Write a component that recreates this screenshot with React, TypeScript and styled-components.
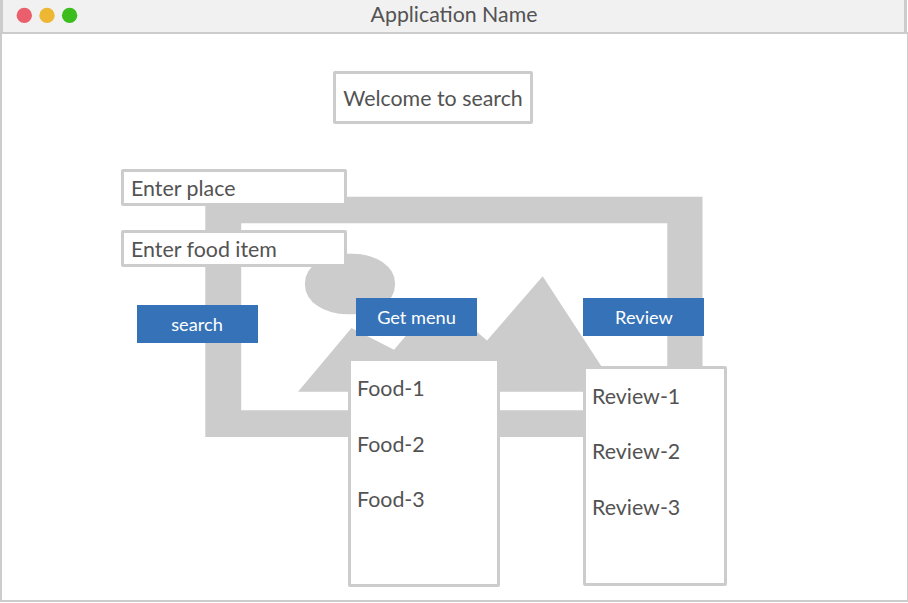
import React from "react";
import styled, { createGlobalStyle } from "styled-components";

const LINE = "#cccccc";

const GlobalStyle = createGlobalStyle`
  * { box-sizing: border-box; }
  body { margin: 0; background: #fff; overflow: hidden; }
`;

const Window = styled.div`
  width: 908px;
  height: 602px;
  display: flex;
  flex-direction: column;
  color: #535353;
  font-family: Lato, sans-serif;
  font-size: 21.38px;
  line-height: 26px;
  white-space: nowrap;
`;

const TitleBar = styled.header`
  height: 32px;
  flex: none;
  display: grid;
  grid-template-columns: 1fr auto 1fr;
  width: 907px;
  border-left: 3px solid ${LINE};
  border-right: 3px solid ${LINE};
  background: #f1f1f1;
`;

const Lights = styled.svg`
  display: block;
  width: 90px;
  height: 32px;
`;

const Title = styled.div`
  padding: 1px 0 0 1px;
  font-size: 21.3px;
  line-height: 26px;
`;

const Body = styled.main`
  flex: 1;
  position: relative;
  display: flex;
  flex-direction: column;
  border: solid ${LINE};
  border-width: 2px 1px 2px 2px;
`;

const Picture = styled.svg`
  position: absolute;
  left: 203px;
  top: 162px;
  width: 499px;
  height: 242px;
`;

const Box = styled.div`
  border: 3px solid ${LINE};
  border-radius: 2px;
  background: #fff;
`;

const Welcome = styled(Box)`
  width: 200px;
  height: 53px;
  margin: 37px 0 0 331px;
  padding-top: 11px;
  text-align: center;
`;

const Columns = styled.div`
  position: relative;
  display: flex;
  align-items: flex-start;
  margin: 45px 0 0 119px;
`;

const Column = styled.section<{ $width: number; $top?: number; $gap?: number }>`
  display: flex;
  flex-direction: column;
  width: ${(p) => p.$width}px;
  margin-top: ${(p) => p.$top ?? 0}px;
  margin-left: ${(p) => p.$gap ?? 0}px;
`;

const Field = styled(Box)`
  height: 37px;
  margin-bottom: 24px;
  padding: 3px 7px;
`;

const Button = styled.button<{ $indent: number; $nudge?: number }>`
  width: 121px;
  height: 38px;
  margin: 0 0 0 ${(p) => p.$indent}px;
  padding: 0 ${(p) => Math.max(0, -(p.$nudge ?? 0))}px 0 ${(p) => Math.max(0, p.$nudge ?? 0)}px;
  border: 0;
  background: #3572b7;
  color: #fff;
  font: 18.2px/22px Lato, sans-serif;
`;

const List = styled(Box).attrs({ as: "ul" })<{ $height: number; $top: number }>`
  list-style: none;
  height: ${(p) => p.$height}px;
  margin: ${(p) => p.$top}px 0 0;
  padding: 14px 6px;
`;

const Item = styled.li<{ $pitch: number }>`
  height: ${(p) => p.$pitch}px;
`;

const foods = ["Food-1", "Food-2", "Food-3"];
const reviews = ["Review-1", "Review-2", "Review-3"];

export default function App() {
  return (
    <Window>
      <GlobalStyle />
      <TitleBar>
        <Lights viewBox="3 0 90 32">
          <circle cx="24.3" cy="15.4" r="7.7" fill="#eb5e6b" />
          <circle cx="47" cy="15.4" r="7.7" fill="#eeb733" />
          <circle cx="69.6" cy="15.4" r="7.7" fill="#3bbd1d" />
        </Lights>
        <Title>Application Name</Title>
      </TitleBar>
      <Body>
        <Picture viewBox="205 196 499 242" fill={LINE}>
          <path
            fillRule="evenodd"
            d="M205.3 196.7H702.5V436.9H205.3ZM241.2 223.3V410.3H667.3V223.3Z"
          />
          <path d="M347 253.7H353A42 29 0 0 1 395 282.7V285.3A42 29 0 0 1 353 314.3H347A42 29 0 0 1 305 285.3V282.7A42 29 0 0 1 347 253.7Z" />
          <path d="M298 391.7L351.5 328L394 349.7L438 298L487 340.5L542.7 276.2L618 391.7Z" />
        </Picture>
        <Welcome>Welcome to search</Welcome>
        <Columns>
          <Column $width={226}>
            <Field>Enter place</Field>
            <Field>Enter food item</Field>
            <Column $width={137} $top={14}>
              <Button $indent={16} $nudge={-1}>search</Button>
            </Column>
          </Column>
          <Column $width={152} $top={129} $gap={1}>
            <Button $indent={8}>Get menu</Button>
            <List $height={229} $top={22}>
              {foods.map((f, i) => (
                <Item key={f} $pitch={i === 0 ? 56 : 55}>{f}</Item>
              ))}
            </List>
          </Column>
          <Column $width={144} $top={129} $gap={83}>
            <Button $indent={0} $nudge={1}>Review</Button>
            <List $height={220} $top={30}>
              {reviews.map((r) => (
                <Item key={r} $pitch={55.4}>{r}</Item>
              ))}
            </List>
          </Column>
        </Columns>
      </Body>
    </Window>
  );
}
